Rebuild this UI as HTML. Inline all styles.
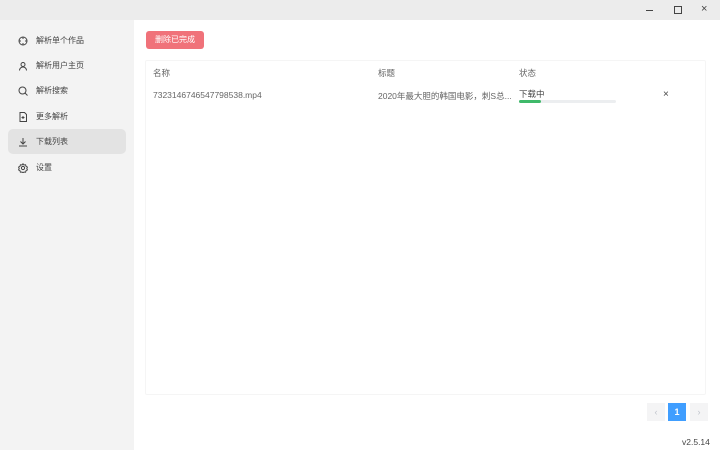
<!DOCTYPE html>
<html><head><meta charset="utf-8"><style>
*{margin:0;padding:0;box-sizing:border-box}
body{width:720px;height:450px;overflow:hidden;background:#fff;font-family:"Liberation Sans","Noto Sans CJK SC",sans-serif;font-size:8px;color:#333;position:relative}
.title{position:absolute;left:0;top:0;width:720px;height:20px;background:#ececec}
.side{position:absolute;left:0;top:20px;width:134px;height:430px;background:#f3f3f3}
.item{position:absolute;left:8px;width:118px;height:25px;border-radius:5px;display:flex;align-items:center;padding-left:10px;color:#444;font-size:8px}
.item svg{width:10px;height:10px;margin-right:8px}
.sel{background:#e3e3e3}
.btn{position:absolute;left:146px;top:31px;width:58px;height:18px;background:#f0727a;border-radius:3px;color:#fff;font-size:8px;text-align:center;line-height:18px}
.box{position:absolute;left:145px;top:60px;width:561px;height:335px;border:1px solid #f5f5f5;border-radius:2px}
.t{position:absolute;font-size:8.5px;color:#666}
</style></head><body>
<div class="title">
<div style="position:absolute;left:646px;top:10px;width:7px;height:1px;background:#444"></div>
<div style="position:absolute;left:674px;top:6px;width:8px;height:8px;border:1px solid #444"></div>
<div style="position:absolute;left:701px;top:3px;font-size:11px;color:#444">×</div>
</div>
<div class="side">
<div class="item" style="top:8px"><svg viewBox="0 0 10 10" fill="none" stroke="#444"><circle cx="5" cy="5" r="4"/><path d="M5 1v2M5 7v2M1 5h2M7 5h2"/></svg>解析单个作品</div>
<div class="item" style="top:33px"><svg viewBox="0 0 10 10" fill="none" stroke="#444"><circle cx="5" cy="3.5" r="2"/><path d="M1.5 9.5a3.5 3.5 0 0 1 7 0"/></svg>解析用户主页</div>
<div class="item" style="top:58px"><svg viewBox="0 0 10 10" fill="none" stroke="#444"><circle cx="4.5" cy="4.5" r="3.5"/><path d="M7 7l2.5 2.5"/></svg>解析搜索</div>
<div class="item" style="top:84px"><svg viewBox="0 0 10 10" fill="none" stroke="#444"><path d="M2 .5h4.5L8.5 2.5v7h-6.5z"/><path d="M5 4v3M3.5 5.5h3"/></svg>更多解析</div>
<div class="item sel" style="top:109px"><svg viewBox="0 0 10 10" fill="none" stroke="#444"><path d="M5 1v5.5M2.5 4.5L5 7l2.5-2.5M1 9h8"/></svg>下载列表</div>
<div class="item" style="top:135px"><svg viewBox="0 0 10 10" fill="none" stroke="#444"><circle cx="5" cy="5" r="1.6"/><path d="M5 .8l1 1.2 1.6-.2.4 1.5 1.4.8-.6 1.4.6 1.4-1.4.8-.4 1.5-1.6-.2-1 1.2-1-1.2-1.6.2-.4-1.5-1.4-.8.6-1.4-.6-1.4 1.4-.8.4-1.5 1.6.2z"/></svg>设置</div>
</div>
<div class="btn">删除已完成</div>
<div class="box"></div>
<div class="t" style="left:153px;top:67px">名称</div>
<div class="t" style="left:378px;top:67px">标题</div>
<div class="t" style="left:519px;top:67px">状态</div>
<div class="t" style="left:153px;top:90px">7323146746547798538.mp4</div>
<div class="t" style="left:378px;top:90px">2020年最大胆的韩国电影，刺S总...</div>
<div class="t" style="left:519px;top:88px;color:#444">下载中</div>
<div style="position:absolute;left:519px;top:100px;width:97px;height:3px;background:#eceef0;border-radius:2px"><div style="width:22px;height:3px;background:#3fb96a;border-radius:2px"></div></div>
<div style="position:absolute;left:663px;top:89px;font-size:10px;color:#444">×</div>
<div style="position:absolute;left:647px;top:403px;width:18px;height:18px;background:#f4f4f5;color:#c0c4cc;text-align:center;line-height:18px;font-size:9px">‹</div>
<div style="position:absolute;left:668px;top:403px;width:18px;height:18px;background:#409eff;color:#fff;text-align:center;line-height:18px;font-size:9px;font-weight:bold">1</div>
<div style="position:absolute;left:690px;top:403px;width:18px;height:18px;background:#f4f4f5;color:#c0c4cc;text-align:center;line-height:18px;font-size:9px">›</div>
<div class="t" style="left:682px;top:437px;color:#444">v2.5.14</div>
</body></html>
